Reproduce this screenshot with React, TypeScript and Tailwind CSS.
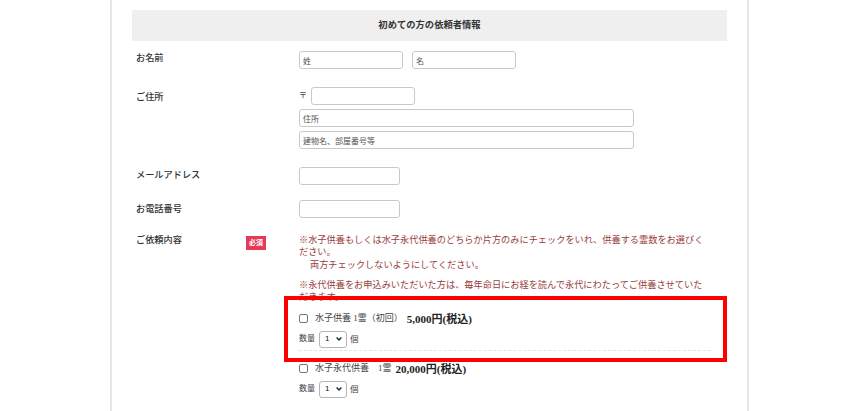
import React from "react";

const F = "font-['Liberation_Serif','Noto_Sans_CJK_JP',serif]";

function TextInput({ w, placeholder }: { w: string; placeholder?: string }) {
  return (
    <input
      readOnly
      placeholder={placeholder}
      className={`${w} h-[18px] border border-[#c9c9c9] rounded-[3px] bg-white px-[3px] text-[8px] text-[#333] placeholder:text-[#555] outline-none font-['Noto_Sans_CJK_JP',sans-serif] block`}
    />
  );
}

function Qty() {
  return (
    <div className="flex items-center h-[18px]">
      <span className="text-[8px] text-[#444] leading-none mr-[4px]">数量</span>
      <div className="w-[28px] h-[17.5px] border border-[#b5b5b5] rounded-[3px] bg-white flex items-center pl-[5px] pr-[4px] justify-between">
        <span className="text-[8px] leading-none text-[#111] font-['Liberation_Sans',sans-serif]">1</span>
        <svg width="6" height="4" viewBox="0 0 6 4">
          <path d="M0.6 0.6 L3 3 L5.4 0.6" fill="none" stroke="#222" strokeWidth="1.4" />
        </svg>
      </div>
      <span className="text-[8.5px] text-[#444] leading-none ml-[3px]">個</span>
    </div>
  );
}

function Check() {
  return <div className="w-[9px] h-[9px] border border-[#767676] rounded-[2px] bg-white shrink-0" />;
}

export default function App() {
  return (
    <div className={`w-[868px] h-[411px] overflow-hidden relative bg-white ${F} text-[#333]`}>
      <div className="ml-[110px] w-[639px] h-full border-l-2 border-r-2 border-[#e6e6e6] px-[20px] pt-[10px]">
        <div className="h-[31px] bg-[#efefef] flex items-center justify-center text-[9.3px] font-bold text-[#333]">
          初めての方の依頼者情報
        </div>

        {/* お名前 */}
        <div className="flex mt-[10px]">
          <div className="w-[114px] pl-[4px] text-[9.2px] leading-[14px] font-medium">お名前</div>
          <div className="w-[53px]" />
          <div className="flex gap-[9px]">
            <TextInput w="w-[104px]" placeholder="姓" />
            <TextInput w="w-[104px]" placeholder="名" />
          </div>
        </div>

        {/* ご住所 */}
        <div className="flex mt-[18px]">
          <div className="w-[114px] pl-[4px] pt-[3px] text-[9.2px] leading-[14px] font-medium">ご住所</div>
          <div className="w-[53px]" />
          <div className="flex flex-col">
            <div className="flex items-center">
              <span className="w-[12px] text-[8px] text-[#444] leading-none">〒</span>
              <TextInput w="w-[104px]" />
            </div>
            <div className="mt-[4px]">
              <TextInput w="w-[335px]" placeholder="住所" />
            </div>
            <div className="mt-[4px]">
              <TextInput w="w-[335px]" placeholder="建物名、部屋番号等" />
            </div>
          </div>
        </div>

        {/* メール */}
        <div className="flex mt-[18px]">
          <div className="w-[114px] pl-[4px] pt-[1px] text-[9.2px] leading-[14px] font-medium">メールアドレス</div>
          <div className="w-[53px]" />
          <TextInput w="w-[101px]" />
        </div>

        {/* 電話 */}
        <div className="flex mt-[15px]">
          <div className="w-[114px] pl-[4px] pt-[2px] text-[9.2px] leading-[14px] font-medium">お電話番号</div>
          <div className="w-[53px]" />
          <TextInput w="w-[101px]" />
        </div>

        {/* ご依頼内容 */}
        <div className="flex mt-[16px]">
          <div className="w-[114px] pl-[4px] text-[9.2px] leading-[12.3px] font-medium">ご依頼内容</div>
          <div className="w-[53px]">
            <div className="mt-[2px] w-[20px] h-[14px] bg-[#e63a5a] text-white text-[7px] font-bold flex items-center justify-center leading-none">
              必須
            </div>
          </div>
          <div className="flex flex-col w-[413px]">
            <div className="w-[408px] text-[9.2px] leading-[12.3px] text-[#983c3c]">
              <p>※水子供養もしくは水子永代供養のどちらか片方のみにチェックをいれ、供養する霊数をお選びください。</p>
              <p className="pl-[11px]">両方チェックしないようにしてください。</p>
              <p className="mt-[8px]">※永代供養をお申込みいただいた方は、毎年命日にお経を読んで永代にわたってご供養させていただきます。</p>
            </div>

            <div className="flex items-center h-[14px] mt-[8.5px]">
              <Check />
              <span className="ml-[7px] text-[9px] text-[#444]">水子供養 1霊（初回）</span>
              <span className="ml-[4px] text-[11px] font-bold text-[#222]">5,000円(税込)</span>
            </div>
            <div className="mt-[4.5px]">
              <Qty />
            </div>
            <div className="mt-[2px] w-[412px] border-t border-dashed border-[#e3e3e3]" />

            <div className="flex items-center h-[14px] mt-[10.5px]">
              <Check />
              <span className="ml-[7px] text-[9px] text-[#444]">水子永代供養　1霊</span>
              <span className="ml-[4px] text-[11px] font-bold text-[#222]">20,000円(税込)</span>
            </div>
            <div className="mt-[4.5px]">
              <Qty />
            </div>
          </div>
        </div>
      </div>

      <div className="absolute left-[284px] top-[296px] w-[443px] h-[66px] border-4 border-[#ff0000] pointer-events-none" />
    </div>
  );
}
